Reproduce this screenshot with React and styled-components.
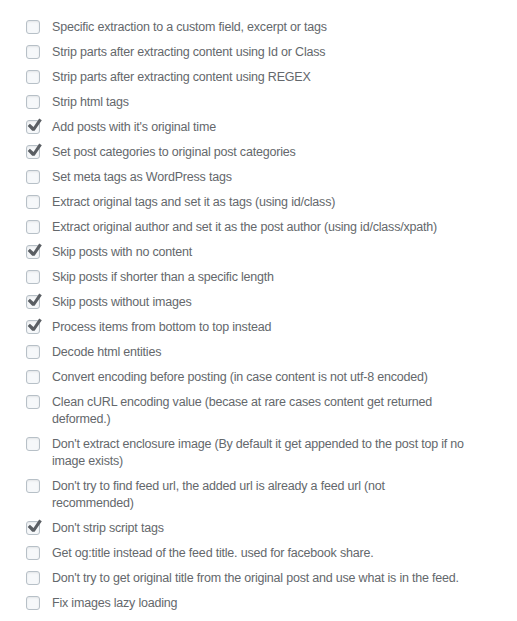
import React from 'react';
import styled, { createGlobalStyle } from 'styled-components';

const GlobalStyle = createGlobalStyle`
  html, body {
    margin: 0;
    padding: 0;
    background: #fff;
  }
  body {
    font-family: "Liberation Sans", Arial, sans-serif;
    font-size: 12.5px;
    letter-spacing: -0.2px;
    color: #5f6266;
  }
`;

const OptionList = styled.div`
  display: flex;
  flex-direction: column;
  gap: 8px;
  padding: 19px 0 0 26px;
  width: 442px;
`;

const Row = styled.label`
  display: flex;
  align-items: flex-start;
  gap: 12px;
  cursor: pointer;
`;

const Box = styled.span`
  position: relative;
  flex: none;
  width: 14px;
  height: 14px;
  margin-top: 1px;
  box-sizing: border-box;
  border: 1px solid #b7c0c7;
  border-radius: 3px;
  background: #f6f8fa;
  box-shadow: inset 0 1px 2px rgba(0, 0, 0, 0.08);
`;

const Check = styled.svg`
  position: absolute;
  left: -3px;
  top: -6px;
  width: 20px;
  height: 20px;
  fill: #5a5e63;
`;

const Text = styled.span`
  line-height: 17px;
  color: #64686c;
`;

const options = [
  ['Specific extraction to a custom field, excerpt or tags', false],
  ['Strip parts after extracting content using Id or Class', false],
  ['Strip parts after extracting content using REGEX', false],
  ['Strip html tags', false],
  ["Add posts with it's original time", true],
  ['Set post categories to original post categories', true],
  ['Set meta tags as WordPress tags', false],
  ['Extract original tags and set it as tags (using id/class)', false],
  ['Extract original author and set it as the post author (using id/class/xpath)', false],
  ['Skip posts with no content', true],
  ['Skip posts if shorter than a specific length', false],
  ['Skip posts without images', true],
  ['Process items from bottom to top instead', true],
  ['Decode html entities', false],
  ['Convert encoding before posting (in case content is not utf-8 encoded)', false],
  ['Clean cURL encoding value (becase at rare cases content get returned deformed.)', false],
  ["Don't extract enclosure image (By default it get appended to the post top if no image exists)", false],
  ["Don't try to find feed url, the added url is already a feed url (not recommended)", false],
  ["Don't strip script tags", true],
  ['Get og:title instead of the feed title. used for facebook share.', false],
  ["Don't try to get original title from the original post and use what is in the feed.", false],
  ['Fix images lazy loading', false],
];

const Checkbox = ({ checked }) => (
  <Box>
    {checked && (
      <Check viewBox="0 0 20 20">
        <path d="M15.2 3.4l2.6 1.8-7.2 10.5H8.2L3.7 10.9l2.2-2.1 3.6 3.3z" />
      </Check>
    )}
  </Box>
);

const App = () => (
  <>
    <GlobalStyle />
    <OptionList>
      {options.map(([label, checked]) => (
        <Row key={label}>
          <Checkbox checked={checked} />
          <Text>{label}</Text>
        </Row>
      ))}
    </OptionList>
  </>
);

export default App;
